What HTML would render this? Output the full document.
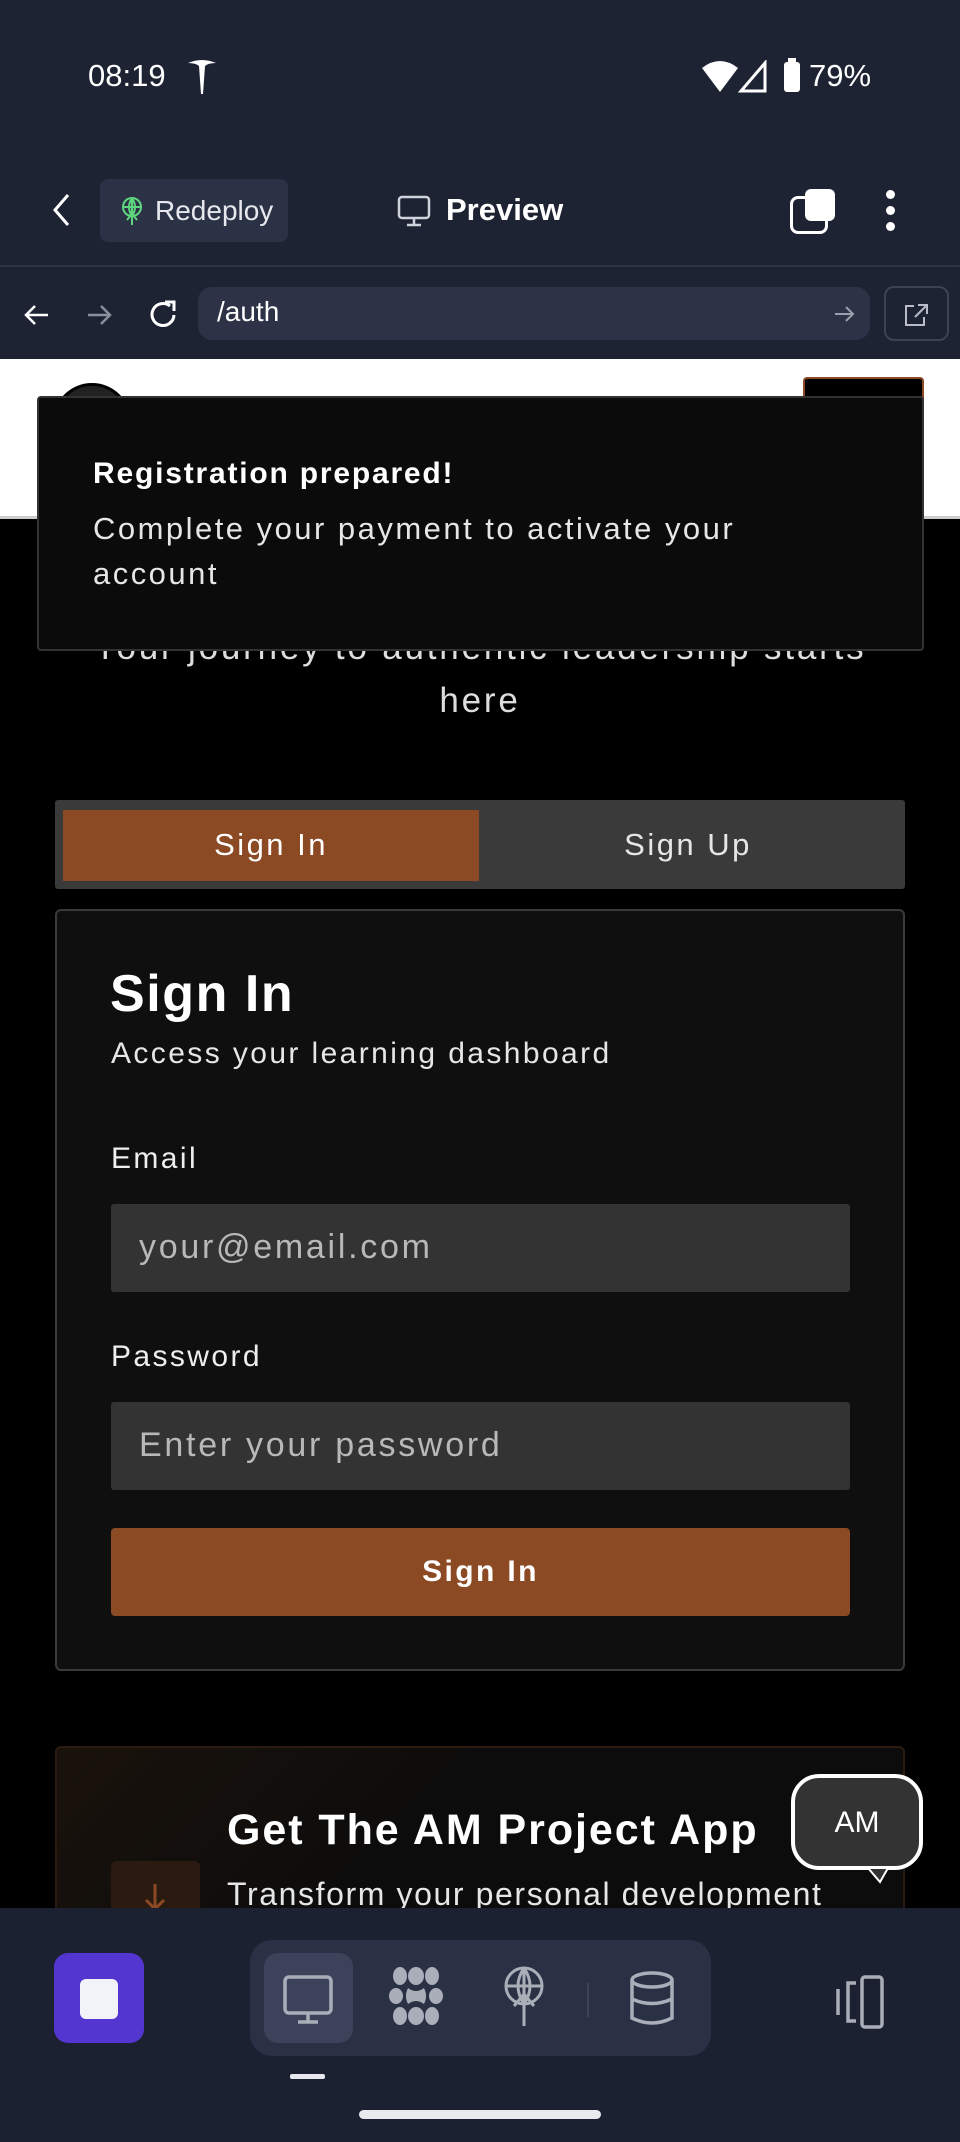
<!DOCTYPE html>
<html><head><meta charset="utf-8"><style>
*{margin:0;padding:0;box-sizing:border-box}
body{width:960px;height:2142px;background:#000;font-family:"Liberation Sans",sans-serif;position:relative;overflow:hidden;color:#fff}
.a{position:absolute}
.t{white-space:nowrap}
.p{letter-spacing:0.08em}
</style></head><body>
<!-- top chrome -->
<div class="a" style="left:0;top:0;width:960px;height:359px;background:#1e2334"></div>
<div class="a t" style="left:88px;top:58px;font-size:31px;color:#fff">08:19</div>
<svg class="a" style="left:186px;top:58px" width="32" height="38" viewBox="0 0 32 38"><path d="M2 5 Q16 -1 30 5 Q22 5 19 8 L17 36 L15 36 L13 8 Q10 5 2 5Z" fill="#fff"/></svg>
<svg class="a" style="left:700px;top:60px" width="40" height="34" viewBox="0 0 40 34"><path d="M2 8 Q20 -6 38 8 L20 32Z" fill="#fff"/></svg>
<svg class="a" style="left:738px;top:60px" width="30" height="34" viewBox="0 0 30 34"><path d="M27 3 V31 H3Z" fill="none" stroke="#fff" stroke-width="3"/></svg>
<div class="a" style="left:784px;top:62px;width:16px;height:30px;background:#fff;border-radius:3px"></div>
<div class="a" style="left:788px;top:58px;width:8px;height:5px;background:#fff"></div>
<div class="a t" style="left:809px;top:58px;font-size:31px">79%</div>

<svg class="a" style="left:50px;top:192px" width="24" height="36" viewBox="0 0 24 36"><path d="M18 3 L5 18 L18 33" fill="none" stroke="#fff" stroke-width="3"/></svg>
<div class="a" style="left:100px;top:179px;width:188px;height:63px;background:#2c3245;border-radius:8px"></div>
<svg class="a" style="left:120px;top:196px" width="24" height="30" viewBox="0 0 24 30"><circle cx="12" cy="11" r="9" fill="none" stroke="#5ed67e" stroke-width="2"/><path d="M3 11H21M12 2V29M12 2Q6 11 12 20Q18 11 12 2M7 24L12 18L17 24" fill="none" stroke="#5ed67e" stroke-width="2"/></svg>
<div class="a t" style="left:155px;top:195px;font-size:28px;color:#e6e8ee">Redeploy</div>
<svg class="a" style="left:397px;top:194px" width="34" height="34" viewBox="0 0 34 34"><rect x="2" y="3" width="30" height="21" rx="3" fill="none" stroke="#cfd3dc" stroke-width="2.5"/><path d="M17 24V30M10 31H24" stroke="#cfd3dc" stroke-width="2.5"/></svg>
<div class="a t" style="left:446px;top:192px;font-size:31px;font-weight:bold">Preview</div>
<div class="a" style="left:790px;top:196px;width:38px;height:38px;border:3px solid #fff;border-radius:8px"></div>
<div class="a" style="left:805px;top:189px;width:30px;height:32px;background:#fff;border-radius:6px"></div>
<div class="a" style="left:886px;top:190px;width:9px;height:9px;background:#fff;border-radius:50%"></div>
<div class="a" style="left:886px;top:206px;width:9px;height:9px;background:#fff;border-radius:50%"></div>
<div class="a" style="left:886px;top:222px;width:9px;height:9px;background:#fff;border-radius:50%"></div>
<div class="a" style="left:0;top:265px;width:960px;height:2px;background:#2c3243"></div>

<svg class="a" style="left:22px;top:300px" width="30" height="30" viewBox="0 0 30 30"><path d="M26 15H4M13 6L4 15L13 24" fill="none" stroke="#fff" stroke-width="2.5"/></svg>
<svg class="a" style="left:84px;top:300px" width="30" height="30" viewBox="0 0 30 30"><path d="M4 15H26M17 6L26 15L17 24" fill="none" stroke="#8a8f9c" stroke-width="2.5"/></svg>
<svg class="a" style="left:146px;top:298px" width="34" height="34" viewBox="0 0 34 34"><path d="M28 17A11 11 0 1 1 24 8" fill="none" stroke="#fff" stroke-width="3"/><path d="M19 4H28V13" fill="none" stroke="#fff" stroke-width="3"/></svg>
<div class="a" style="left:198px;top:287px;width:672px;height:53px;background:#2d3246;border-radius:14px"></div>
<div class="a t" style="left:217px;top:296px;font-size:28px;color:#fff">/auth</div>
<svg class="a" style="left:832px;top:302px" width="24" height="24" viewBox="0 0 24 24"><path d="M3 12H21M14 5L21 12L14 19" fill="none" stroke="#9aa0ad" stroke-width="2"/></svg>
<div class="a" style="left:884px;top:286px;width:65px;height:55px;border:2px solid #3b4255;border-radius:10px"></div>
<svg class="a" style="left:902px;top:302px" width="28" height="26" viewBox="0 0 28 26"><path d="M12 4H4V23H22V15M16 3H25V12M25 3L13 15" fill="none" stroke="#b8bdc8" stroke-width="2"/></svg>

<!-- page header -->
<div class="a" style="left:0;top:359px;width:960px;height:159px;background:#fff"></div>
<div class="a" style="left:53px;top:383px;width:78px;height:78px;border-radius:50%;background:#222;border:3px solid #000"></div>
<div class="a" style="left:803px;top:377px;width:121px;height:70px;background:#000;border:2px solid #8b4a24;border-radius:4px"></div>
<div class="a" style="left:0;top:516px;width:960px;height:3px;background:#ccc"></div>

<div class="a t p" style="left:0;width:960px;text-align:center;top:628px;font-size:35px;color:#ddd">Your journey to authentic leadership starts</div>
<div class="a t p" style="left:0;width:960px;text-align:center;top:681px;font-size:35px;color:#ddd">here</div>

<!-- toast -->
<div class="a" style="left:37px;top:396px;width:887px;height:255px;background:#0b0b0b;border:2px solid #333;border-radius:4px"></div>
<div class="a t" style="left:93px;top:457px;font-size:30px;font-weight:bold;letter-spacing:0.06em">Registration prepared!</div>
<div class="a p" style="left:93px;top:506px;width:700px;font-size:31px;line-height:45px;color:#e6e6e6">Complete your payment to activate your account</div>

<!-- tabs -->
<div class="a" style="left:55px;top:800px;width:850px;height:89px;background:#3a3a3a;border-radius:3px"></div>
<div class="a" style="left:63px;top:810px;width:416px;height:71px;background:#8b4a24"></div>
<div class="a t p" style="left:63px;width:416px;text-align:center;top:827px;font-size:31px">Sign In</div>
<div class="a t p" style="left:479px;width:418px;text-align:center;top:827px;font-size:31px;color:#e6e6e6">Sign Up</div>

<!-- card -->
<div class="a" style="left:55px;top:909px;width:850px;height:762px;background:#0f0f0f;border:2px solid #3a3a3a;border-radius:6px"></div>
<div class="a t" style="left:110px;top:964px;font-size:52px;font-weight:bold;letter-spacing:0.03em">Sign In</div>
<div class="a t p" style="left:111px;top:1037px;font-size:30px;color:#e6e6e6">Access your learning dashboard</div>
<div class="a t p" style="left:111px;top:1142px;font-size:30px;color:#eee">Email</div>
<div class="a" style="left:111px;top:1204px;width:739px;height:88px;background:#333;border-radius:3px"></div>
<div class="a t p" style="left:139px;top:1228px;font-size:34px;color:#b8b8b8">your@email.com</div>
<div class="a t p" style="left:111px;top:1340px;font-size:30px;color:#eee">Password</div>
<div class="a" style="left:111px;top:1402px;width:739px;height:88px;background:#333;border-radius:3px"></div>
<div class="a t p" style="left:139px;top:1426px;font-size:34px;color:#b8b8b8">Enter your password</div>
<div class="a" style="left:111px;top:1528px;width:739px;height:88px;background:#8b4a24;border-radius:4px"></div>
<div class="a t p" style="left:111px;width:739px;text-align:center;top:1555px;font-size:30px;font-weight:bold">Sign In</div>

<!-- app card -->
<div class="a" style="left:55px;top:1746px;width:850px;height:300px;background:linear-gradient(135deg,#1a120c,#0c0c0c 40%);border:2px solid #2a1a10;border-radius:6px"></div>
<div class="a" style="left:111px;top:1861px;width:89px;height:89px;background:#2a1a10;border-radius:6px"></div>
<svg class="a" style="left:140px;top:1882px" width="30" height="30" viewBox="0 0 30 30"><path d="M15 2V26M6 18L15 27L24 18" fill="none" stroke="#8b4a24" stroke-width="3"/></svg>
<div class="a t" style="left:227px;top:1806px;font-size:43px;font-weight:bold;letter-spacing:0.045em">Get The AM Project App</div>
<div class="a t" style="left:227px;top:1876px;font-size:32px;color:#e6e6e6;letter-spacing:0.05em">Transform your personal development</div>

<div class="a" style="left:791px;top:1774px;width:132px;height:96px;background:#333;border:4px solid #fff;border-radius:28px"></div>
<div class="a t" style="left:791px;width:132px;text-align:center;top:1806px;font-size:30px">AM</div>
<svg class="a" style="left:866px;top:1866px" width="24" height="20" viewBox="0 0 24 20"><path d="M2 2L14 16L22 2Z" fill="#333" stroke="#fff" stroke-width="2"/></svg>

<!-- bottom nav -->
<div class="a" style="left:0;top:1908px;width:960px;height:234px;background:#1c2131"></div>
<div class="a" style="left:54px;top:1953px;width:90px;height:90px;background:#5336cf;border-radius:14px"></div>
<div class="a" style="left:80px;top:1979px;width:38px;height:40px;background:#f2f3f8;border-radius:6px"></div>
<div class="a" style="left:250px;top:1940px;width:461px;height:116px;background:#2b3145;border-radius:22px"></div>
<div class="a" style="left:264px;top:1953px;width:89px;height:90px;background:#3b4259;border-radius:14px"></div>
<svg class="a" style="left:283px;top:1975px" width="50" height="50" viewBox="0 0 50 50"><rect x="2" y="2" width="46" height="36" rx="4" fill="none" stroke="#a9aeb8" stroke-width="3.5"/><path d="M25 38V46M15 47H35" stroke="#a9aeb8" stroke-width="3.5"/></svg>
<svg class="a" style="left:388px;top:1966px" width="56" height="60" viewBox="0 0 56 60"><g fill="#a9aeb8"><ellipse cx="12" cy="10" rx="7" ry="9"/><ellipse cx="28" cy="10" rx="8" ry="9"/><ellipse cx="44" cy="10" rx="7" ry="9"/><ellipse cx="8" cy="30" rx="7" ry="8"/><path d="M20 22Q28 28 36 22Q40 30 36 38Q28 32 20 38Q16 30 20 22Z"/><ellipse cx="48" cy="30" rx="7" ry="8"/><ellipse cx="12" cy="50" rx="7" ry="9"/><ellipse cx="28" cy="50" rx="8" ry="9"/><ellipse cx="44" cy="50" rx="7" ry="9"/></g></svg>
<svg class="a" style="left:502px;top:1966px" width="44" height="62" viewBox="0 0 44 62"><circle cx="22" cy="20" r="18" fill="none" stroke="#a9aeb8" stroke-width="3"/><path d="M4 20H40M22 2V60M22 2Q10 20 22 38Q34 20 22 2M12 40L22 28L32 40" fill="none" stroke="#a9aeb8" stroke-width="3"/></svg>
<div class="a" style="left:587px;top:1983px;width:2px;height:34px;background:#3c4357"></div>
<svg class="a" style="left:628px;top:1970px" width="48" height="58" viewBox="0 0 48 58"><ellipse cx="24" cy="10" rx="20" ry="7" fill="none" stroke="#a9aeb8" stroke-width="3.5"/><path d="M4 10V48Q24 58 44 48V10M4 29Q24 38 44 29" fill="none" stroke="#a9aeb8" stroke-width="3.5"/></svg>
<svg class="a" style="left:834px;top:1975px" width="54" height="54" viewBox="0 0 54 54"><rect x="28" y="2" width="20" height="50" rx="3" fill="none" stroke="#a9aeb8" stroke-width="3.5"/><path d="M22 8H14V46H22M4 14V40" fill="none" stroke="#a9aeb8" stroke-width="3.5"/></svg>
<div class="a" style="left:290px;top:2074px;width:35px;height:5px;background:#e6e8ee;border-radius:2px"></div>
<div class="a" style="left:359px;top:2110px;width:242px;height:9px;background:#e8eaee;border-radius:5px"></div>
</body></html>
